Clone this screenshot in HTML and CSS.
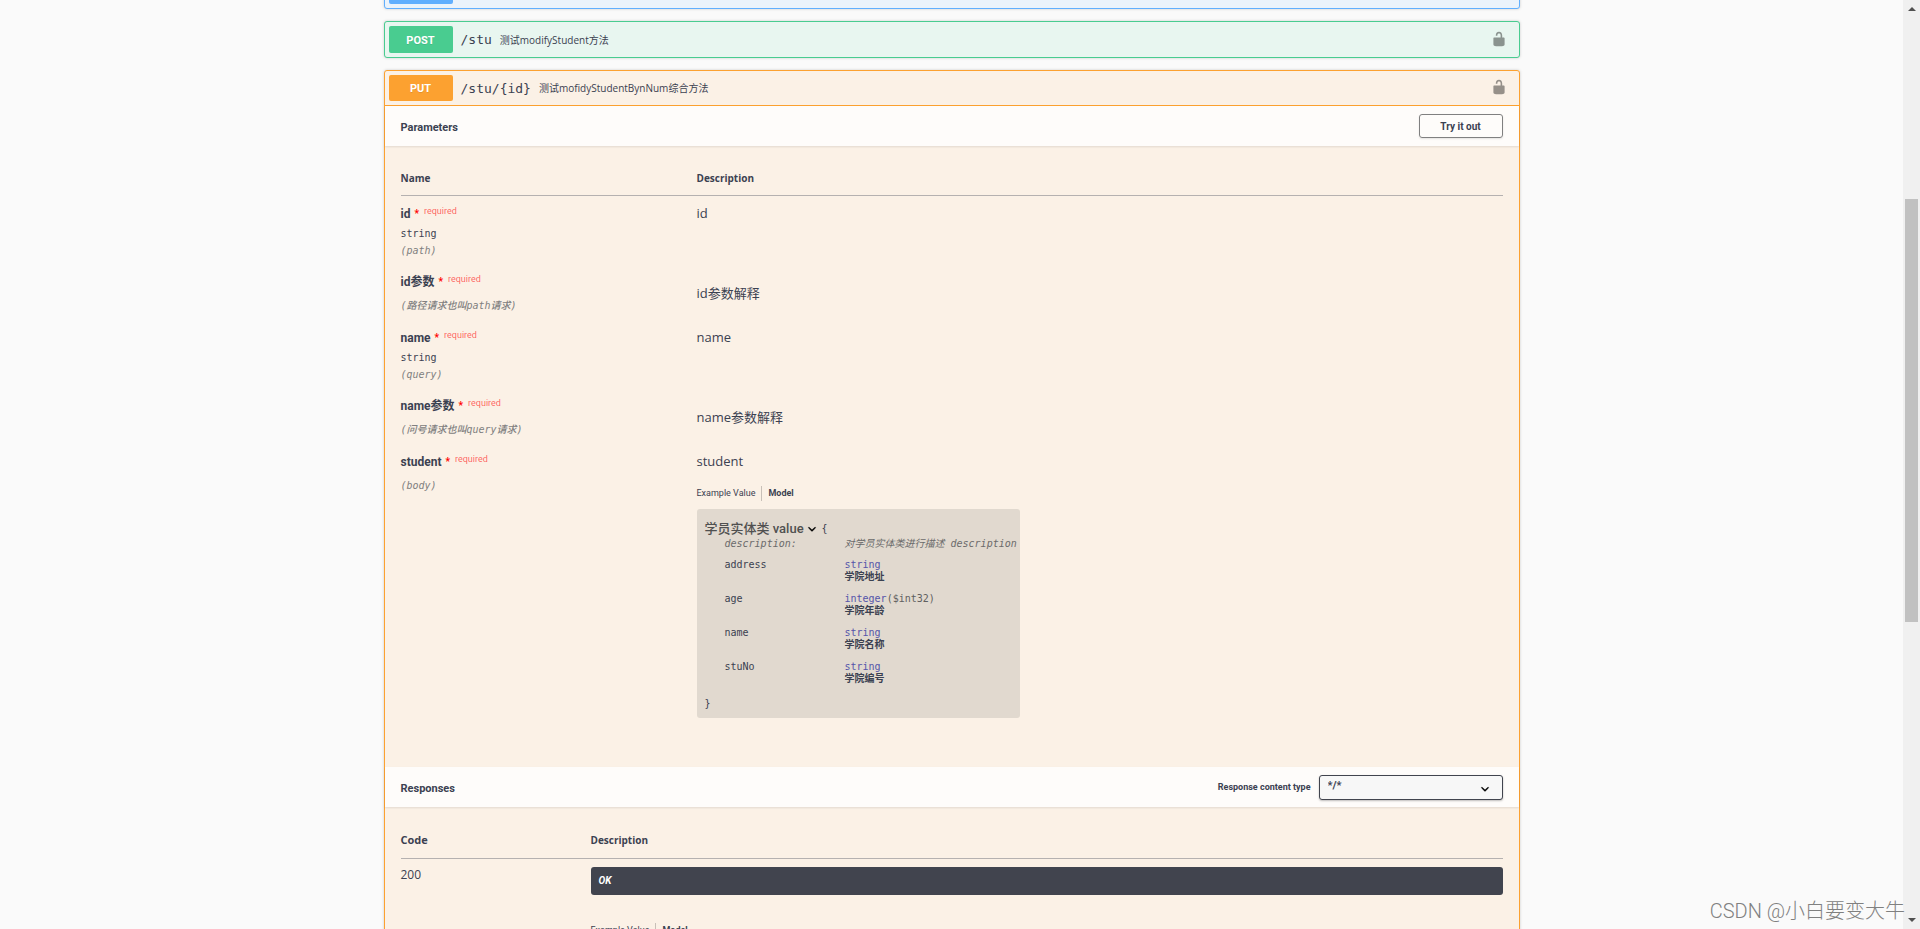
FILE: index.html
```html
<!DOCTYPE html>
<html lang="zh-CN">
<head>
<meta charset="utf-8">
<title>Swagger UI</title>
<link rel="stylesheet" href="styles.css">
</head>
<body>
<svg class="defs" aria-hidden="true">
  <symbol id="unlocked" viewBox="0 0 20 20"><path d="M15.8 8H14V5.6C14 2.703 12.665 1 10 1 7.334 1 6 2.703 6 5.6V6h2v-.801C8 3.754 8.797 3 10 3c1.203 0 2 .754 2 2.199V8H4c-.553 0-1 .646-1 1.199V17c0 .549.428 1.139.951 1.307l1.197.387C5.672 18.861 6.55 19 7.1 19h5.8c.549 0 1.428-.139 1.951-.307l1.196-.387c.524-.167.953-.757.953-1.306V9.199C17 8.646 16.352 8 15.8 8z"/></symbol>
  <symbol id="chevron" viewBox="0 0 20 20"><path stroke="currentColor" stroke-width=".4" d="M13.418 7.859c.271-.268.709-.268.978 0 .27.268.272.701 0 .969l-3.908 3.83c-.27.268-.707.268-.979 0l-3.908-3.83c-.27-.267-.27-.701 0-.969.271-.268.709-.268.978 0L10 11l3.418-3.141z"/></symbol>
</svg>
<div class="page">
  <main class="content">
    <div class="operations">
      <section class="op op--get">
        <div class="summary"><button class="method">GET</button></div>
      </section>
      <section class="op op--post">
        <div class="summary">
          <button class="method">POST</button>
          <span class="path">/stu</span>
          <span class="about">测试modifyStudent方法</span>
          <button class="lock" aria-label="Authorize"><svg class="icon"><use href="#unlocked"/></svg></button>
        </div>
      </section>
      <section class="op op--put">
        <div class="summary">
          <button class="method">PUT</button>
          <span class="path">/stu/{id}</span>
          <span class="about">测试mofidyStudentBynNum综合方法</span>
          <button class="lock" aria-label="Authorize"><svg class="icon"><use href="#unlocked"/></svg></button>
        </div>
        <header class="bar">
          <h4 class="bar-title">Parameters</h4>
          <button class="try">Try it out</button>
        </header>
        <div class="panel panel--params">
          <table class="grid">
            <thead><tr><th class="col-name">Name</th><th>Description</th></tr></thead>
            <tbody>
              <tr>
                <td>
                  <div class="name">id<span class="star">*</span><span class="required">required</span></div>
                  <div class="type">string</div>
                  <div class="in">(path)</div>
                </td>
                <td><p class="text">id</p></td>
              </tr>
              <tr>
                <td>
                  <div class="name">id参数<span class="star">*</span><span class="required">required</span></div>
                  <div class="in in--alone">(路径请求也叫path请求)</div>
                </td>
                <td><p class="text text--spaced">id参数解释</p></td>
              </tr>
              <tr>
                <td>
                  <div class="name">name<span class="star">*</span><span class="required">required</span></div>
                  <div class="type">string</div>
                  <div class="in">(query)</div>
                </td>
                <td><p class="text">name</p></td>
              </tr>
              <tr>
                <td>
                  <div class="name">name参数<span class="star">*</span><span class="required">required</span></div>
                  <div class="in in--alone">(问号请求也叫query请求)</div>
                </td>
                <td><p class="text text--spaced">name参数解释</p></td>
              </tr>
              <tr>
                <td>
                  <div class="name">student<span class="star">*</span><span class="required">required</span></div>
                  <div class="in in--alone">(body)</div>
                </td>
                <td>
                  <p class="text">student</p>
                  <div class="tabs">
                    <button class="tab">Example Value</button>
                    <button class="tab tab--active">Model</button>
                  </div>
                  <div class="model">
                    <div class="model-head"><span class="model-title">学员实体类 value</span><svg class="icon"><use href="#chevron"/></svg><span>{</span></div>
                    <table class="props">
                      <tbody>
                        <tr class="props-about"><td>description:</td><td>对学员实体类进行描述 description</td></tr>
                        <tr><td>address</td><td><span class="kind">string</span><b class="note">学院地址</b></td></tr>
                        <tr><td>age</td><td><span class="kind">integer</span><span class="format">($int32)</span><b class="note">学院年龄</b></td></tr>
                        <tr><td>name</td><td><span class="kind">string</span><b class="note">学院名称</b></td></tr>
                        <tr><td>stuNo</td><td><span class="kind">string</span><b class="note">学院编号</b></td></tr>
                      </tbody>
                    </table>
                    <div class="model-end">}</div>
                  </div>
                </td>
              </tr>
            </tbody>
          </table>
        </div>
        <header class="bar">
          <h4 class="bar-title">Responses</h4>
          <label class="content-type" for="content-type">Response content type</label>
          <span class="select-box">
            <select class="select" id="content-type"><option>*/*</option></select>
            <svg class="icon select-arrow"><use href="#chevron"/></svg>
          </span>
        </header>
        <div class="panel">
          <table class="grid grid--responses">
            <thead><tr><th class="col-code">Code</th><th>Description</th></tr></thead>
            <tbody>
              <tr>
                <td class="code">200</td>
                <td>
                  <div class="result">OK</div>
                  <div class="tabs tabs--response">
                    <button class="tab">Example Value</button>
                    <button class="tab tab--active">Model</button>
                  </div>
                </td>
              </tr>
            </tbody>
          </table>
        </div>
      </section>
    </div>
  </main>
  <aside class="scrollbar" aria-hidden="true">
    <span class="arrow arrow--up"></span>
    <span class="thumb"></span>
    <span class="arrow arrow--down"></span>
  </aside>
</div>
<div class="watermark">CSDN @小白要变大牛</div>
</body>
</html>
```

FILE: styles.css
```css
:root {
  --ink: #3b4151;
  --head: Roboto, "Noto Sans CJK SC", sans-serif;
  --body: "Open Sans", "Noto Sans CJK SC", sans-serif;
  --mono: "DejaVu Sans Mono", "Noto Sans CJK SC", monospace;
}

* { box-sizing: border-box; }

body {
  margin: 0;
  height: 100vh;
  overflow: hidden;
  position: relative;
  background: #fafafa;
  color: var(--ink);
  font-family: var(--body);
  font-size: 10px;
}

button { padding: 0; border: 0; background: none; color: inherit; font-family: var(--head); cursor: pointer; }
h4, p { margin: 0; }
table { border-collapse: collapse; }
.defs { position: absolute; width: 0; height: 0; }
.icon { width: 16px; height: 16px; fill: currentColor; display: block; }

.page { display: flex; height: 100%; }
.content { flex: 1; overflow: hidden; }

.operations {
  display: flex;
  flex-direction: column;
  gap: 12px;
  max-width: 1136px;
  margin: -28px auto 0;
}

/* Operation blocks */
.op { border: 1px solid var(--tone); border-radius: 3px; background: var(--tint); box-shadow: 0 0 3px rgba(0, 0, 0, .19); }
.op--get { --tone: #61affe; --tint: #ebf3fb; }
.op--post { --tone: #49cc90; --tint: #e8f6f0; }
.op--put { --tone: #fca130; --tint: #fbf1e6; }

.summary { display: flex; align-items: center; padding: 4px; }
.op--put .summary { border-bottom: 1px solid var(--tone); }
.method {
  width: 64px;
  height: 27px;
  padding-top: 1px;
  border-radius: 2px;
  background: var(--tone);
  color: #fff;
  font-size: 11px;
  font-weight: 700;
  text-shadow: 0 1px 0 rgba(0, 0, 0, .1);
}
.op--put .method { height: 26px; }
.path { padding: 1px 8px 0; font: 500 13px/20px var(--mono); }
.about { font-size: 10px; line-height: 20px; }
.lock { margin-left: auto; margin-right: 8px; color: #000; opacity: .4; }
.lock .icon { margin-bottom: 2px; }

.bar {
  display: flex;
  align-items: center;
  min-height: 40px;
  padding: 0 16px;
  background: rgba(255, 255, 255, .8);
  box-shadow: 0 1px 2px rgba(0, 0, 0, .1);
}
.bar-title { flex: 1; padding-top: 3px; font: 700 11px/16px var(--head); }
.try {
  width: 84px;
  height: 24px;
  border: 1px solid #808080;
  border-radius: 3px;
  font-size: 10px;
  font-weight: 700;
  box-shadow: 0 1px 2px rgba(0, 0, 0, .1);
}
.content-type { margin-right: 8px; font: 700 9px/16px var(--head); }
.select-box { position: relative; display: flex; }
.select {
  appearance: none;
  width: 184px;
  height: 25px;
  padding: 0 8px 2px;
  border: 1px solid #41444e;
  border-radius: 3px;
  background: #f7f7f7;
  box-shadow: 0 1px 2px rgba(0, 0, 0, .25);
  color: var(--ink);
  font: 700 11px/20px var(--head);
}
.select-arrow { position: absolute; right: 10px; top: 6px; color: #000; pointer-events: none; }

/* Parameter and response tables */
.panel { padding: 16px; }
.panel--params { padding-bottom: 49px; }
.grid { width: 100%; }
.grid > thead th {
  padding: 8px 0 9px;
  border-bottom: 1px solid rgba(59, 65, 81, .2);
  font-size: 10px;
  font-weight: 700;
  line-height: 16px;
  text-align: left;
}
.grid > tbody > tr > td { padding: 8px 0 6px; vertical-align: top; }
.panel--params .grid > tbody > tr:last-child > td { padding-bottom: 0; }
.col-name { width: 296px; }
.grid--responses > thead th { line-height: 18px; }
.col-code { width: 190px; }
.grid > thead .col-code { font-size: 11px; }

.name { display: flex; font: 700 12px/20px var(--head); }
.star { padding-left: 4px; color: #f00; font-size: 10px; }
.required { padding-left: 5px; color: rgba(255, 0, 0, .6); font-size: 9px; font-weight: 400; line-height: 14px; }
.type { padding-top: 1px; font: 500 10px/18px var(--mono); }
.in { color: #808080; font: italic 10px/15px var(--mono); }
.in--alone { padding-bottom: 1px; margin-top: 6px; font-weight: 500; }
.text { font-size: 13px; line-height: 18px; }
.text--spaced { margin-top: 12px; }

.tabs { display: flex; margin-top: 16px; }
.tab { height: 15px; font-size: 9px; line-height: 15px; }
.tab--active { margin-left: 6px; padding-left: 6px; border-left: 1px solid rgba(0, 0, 0, .2); font-weight: 700; }
.tabs--response { margin-top: 28px; }

.model {
  width: max-content;
  margin-top: 8px;
  padding: 11px 3px 6px 8px;
  border-radius: 3px;
  background: #e1d9cf;
  font: 10px/12px var(--mono);
}
.model-head { display: flex; align-items: center; height: 18px; }
.model-head .icon { margin-right: 2px; color: #000; }
.model-title { color: #505050; font: 500 13px/18px var(--head); }
.props { margin-left: 20px; }
.props td { padding: 0 0 10px; vertical-align: top; }
.props td:first-child { width: 120px; }
.props .props-about td { padding-bottom: 9px; color: #6b6b6b; font-style: italic; }
.kind { color: #55a; }
.format { color: #606060; }
.note { display: block; line-height: 12px; }
.model-end { padding: 3px 0 2px; }

.code { font-size: 12px; line-height: 16px; }
.result {
  padding: 4px 8px;
  border-radius: 3px;
  background: #41444e;
  color: #fff;
  font: italic 700 10px/20px var(--head);
}

/* Page scrollbar */
.scrollbar { display: flex; flex-direction: column; align-items: center; width: 17px; padding: 7px 0; background: #f0f0f0; }
.thumb { width: 13px; height: 423px; margin: 188px 0 auto; background: #c1c1c1; }
.arrow { border: 4px solid transparent; }
.arrow--up { border-top: 0; border-bottom-color: #505050; }
.arrow--down { border-bottom: 0; border-top-color: #505050; }

.watermark {
  position: absolute;
  right: 15px;
  bottom: 3px;
  color: #808080;
  font: 300 20px/30px Roboto, "Noto Sans CJK SC", sans-serif;
}
```
